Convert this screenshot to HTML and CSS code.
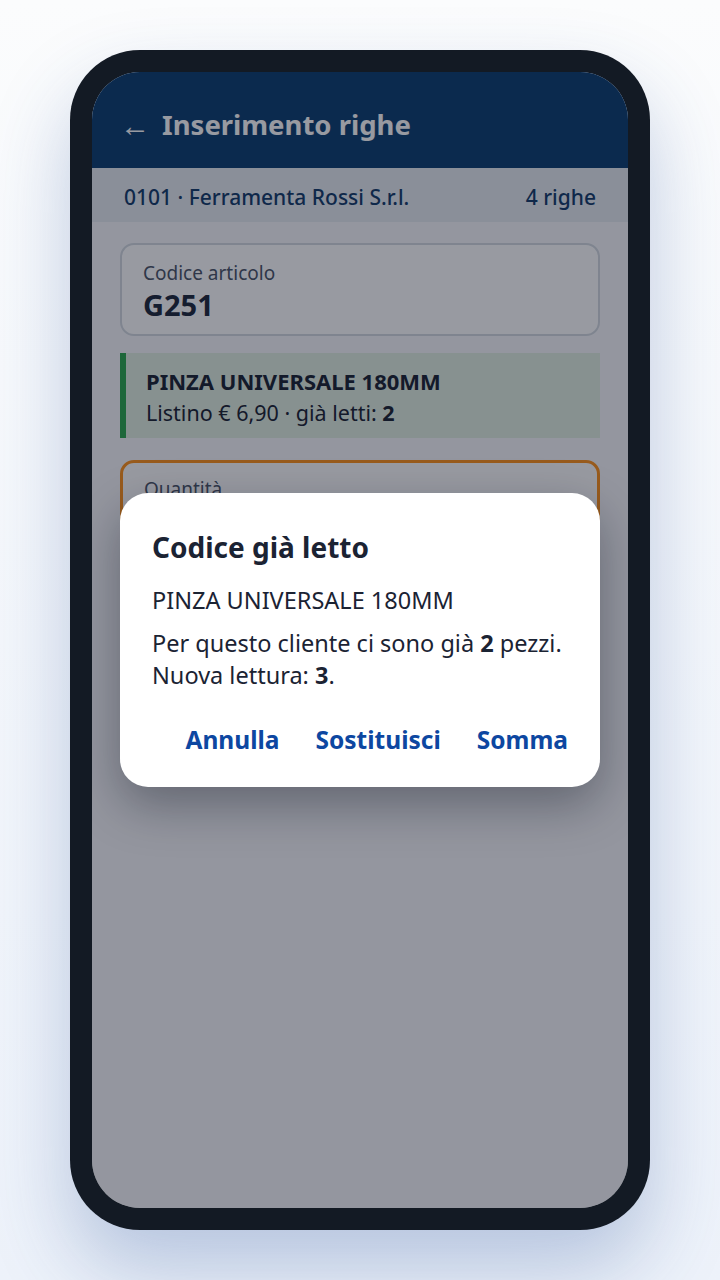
FILE: index.html
```html
<!DOCTYPE html>
<html lang="it">
<head>
    <meta charset="UTF-8">
    <meta name="viewport" content="width=device-width, initial-scale=1.0">
    <title>Inserimento righe</title>
    <link rel="stylesheet" href="styles.css">
</head>
<body>
    <div class="phone">
        <div class="screen">
            <header class="appbar">
                <span class="back">←</span>
                <h1>Inserimento righe</h1>
            </header>
            <div class="subbar">
                <span>0101 · Ferramenta Rossi S.r.l.</span>
                <span>4 righe</span>
            </div>
            <main class="content">
                <div class="field">
                    <label>Codice articolo</label>
                    <div class="value">G251</div>
                </div>

                <div class="product">
                    <div class="product-name">PINZA UNIVERSALE 180MM</div>
                    <div class="product-info">Listino € 6,90 · già letti: <b>2</b></div>
                </div>

                <div class="field field-active">
                    <label>Quantità</label>
                    <div class="value">3</div>
                </div>
            </main>

            <!-- dialog codice duplicato -->
            <div class="scrim">
                <div class="dialog">
                    <h2>Codice già letto</h2>
                    <p class="dialog-item">PINZA UNIVERSALE 180MM</p>
                    <p class="dialog-text">Per questo cliente ci sono già <b>2</b> pezzi.<br>Nuova lettura: <b>3</b>.</p>
                    <div class="dialog-actions">
                        <button>Annulla</button>
                        <button>Sostituisci</button>
                        <button>Somma</button>
                    </div>
                </div>
            </div>
        </div>
    </div>
</body>
</html>
```

FILE: styles.css
```css
body {
    font-family: "Noto Sans", "Open Sans", sans-serif;
    margin: 0;
    padding: 50px 0 0;
    min-height: 1230px;
    background: linear-gradient(180deg, #fbfcfd 0%, #edf2fa 100%);
    display: flex;
    justify-content: center;
    color: #1b2333;
}
.phone {
    width: 580px;
    height: 1180px;
    box-sizing: border-box;
    padding: 22px;
    border-radius: 70px;
    background-color: #131a24;
    box-shadow: 0 40px 80px rgba(40, 80, 150, 0.28);
}
.screen {
    position: relative;
    height: 100%;
    border-radius: 48px;
    overflow: hidden;
    background-color: #f8f9fb;
}
.appbar {
    height: 96px;
    box-sizing: border-box;
    display: flex;
    align-items: center;
    gap: 12px;
    padding: 8px 28px 0;
    background-color: #0d3e71;
    color: #ffffff;
}
.appbar .back {
    font-size: 30px;
    font-weight: 400;
}
.appbar h1 {
    margin: 0;
    font-size: 27.5px;
    font-weight: 700;
}
.subbar {
    height: 54px;
    box-sizing: border-box;
    display: flex;
    align-items: center;
    justify-content: space-between;
    padding: 3px 32px 0;
    background-color: #e7edf2;
    color: #143c6a;
    font-size: 21px;
    font-weight: 500;
}
.content {
    padding: 21px 28px;
    display: flex;
    flex-direction: column;
    gap: 17px;
}
.field {
    border: 2px solid #d4dae1;
    border-radius: 14px;
    padding: 15px 21px 10px;
    background-color: #ffffff;
}
.field label {
    display: block;
    font-size: 19px;
    color: #4b5568;
    line-height: 26px;
}
.field .value {
    font-size: 29px;
    font-weight: 700;
    line-height: 38px;
    color: #1e293b;
}
.field-active {
    border: 3px solid #ff931c;
    margin-top: 5px;
    padding-top: 13px;
    height: 120px;
    box-sizing: border-box;
}
.product {
    border-left: 6px solid #2ea84e;
    background-color: #e2efe2;
    padding: 13px 20px 10px;
}
.product-name {
    font-size: 22px;
    font-weight: 700;
    line-height: 31px;
}
.product-info {
    font-size: 21.5px;
    line-height: 31px;
}
.scrim {
    position: absolute;
    inset: 0;
    background-color: rgba(10, 15, 30, 0.42);
    display: flex;
    align-items: center;
    justify-content: center;
}
.dialog {
    width: 480px;
    box-sizing: border-box;
    padding: 30px 32px 23px;
    background-color: #ffffff;
    border-radius: 28px;
    box-shadow: 0 18px 48px rgba(10, 15, 30, 0.35);
}
.dialog h2 {
    margin: 0 0 13px;
    font-size: 28px;
    font-weight: 700;
    line-height: 48px;
    color: #1b2333;
}
.dialog p {
    margin: 0;
    font-size: 23.5px;
    line-height: 32px;
    color: #1b2333;
}
.dialog .dialog-item {
    margin-bottom: 11px;
}
.dialog-actions {
    display: flex;
    justify-content: flex-end;
    gap: 36px;
    margin-top: 25px;
}
.dialog-actions button {
    font-family: inherit;
    font-size: 24.5px;
    font-weight: 700;
    line-height: 32px;
    color: #0d47a1;
    background: none;
    border: none;
    padding: 8px 0;
    cursor: pointer;
}
```
